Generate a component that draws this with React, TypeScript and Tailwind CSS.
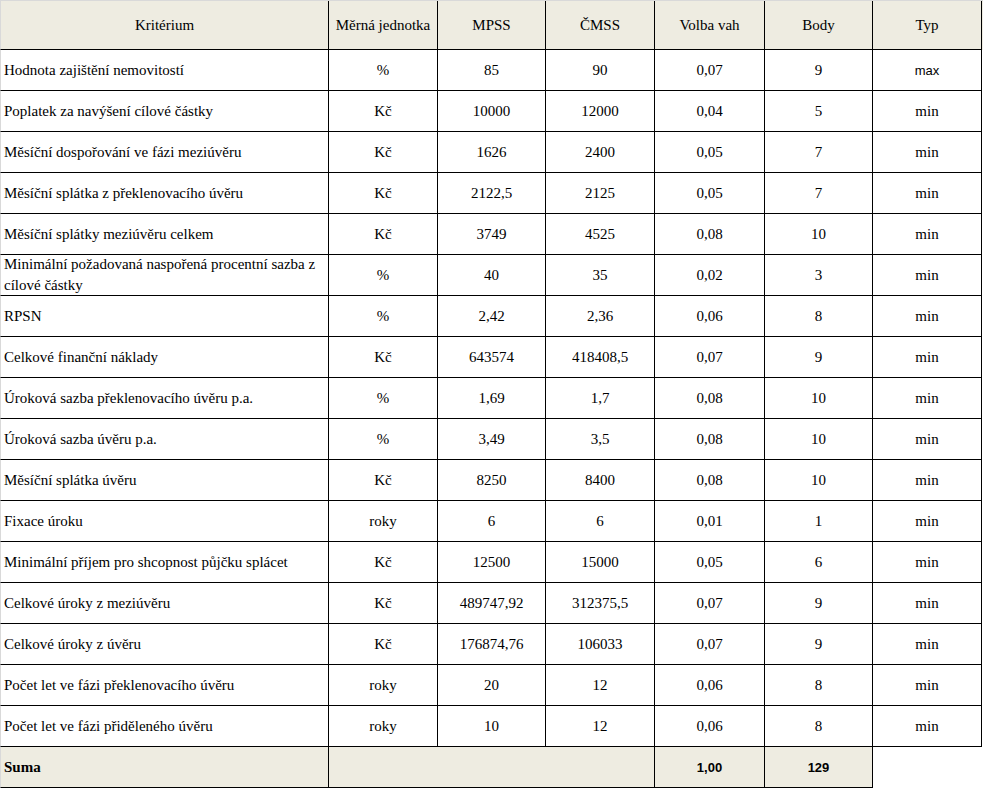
const rows: [string, string, string, string, string, string, string][] = [
  ["Hodnota zajištění nemovitostí", "%", "85", "90", "0,07", "9", "max"],
  ["Poplatek za navýšení cílové částky", "Kč", "10000", "12000", "0,04", "5", "min"],
  ["Měsíční dospořování ve fázi meziúvěru", "Kč", "1626", "2400", "0,05", "7", "min"],
  ["Měsíční splátka z překlenovacího úvěru", "Kč", "2122,5", "2125", "0,05", "7", "min"],
  ["Měsíční splátky meziúvěru celkem", "Kč", "3749", "4525", "0,08", "10", "min"],
  ["Minimální požadovaná naspořená procentní sazba z cílové částky", "%", "40", "35", "0,02", "3", "min"],
  ["RPSN", "%", "2,42", "2,36", "0,06", "8", "min"],
  ["Celkové finanční náklady", "Kč", "643574", "418408,5", "0,07", "9", "min"],
  ["Úroková sazba překlenovacího úvěru p.a.", "%", "1,69", "1,7", "0,08", "10", "min"],
  ["Úroková sazba úvěru p.a.", "%", "3,49", "3,5", "0,08", "10", "min"],
  ["Měsíční splátka úvěru", "Kč", "8250", "8400", "0,08", "10", "min"],
  ["Fixace úroku", "roky", "6", "6", "0,01", "1", "min"],
  ["Minimální příjem pro shcopnost půjčku splácet", "Kč", "12500", "15000", "0,05", "6", "min"],
  ["Celkové úroky z meziúvěru", "Kč", "489747,92", "312375,5", "0,07", "9", "min"],
  ["Celkové úroky z úvěru", "Kč", "176874,76", "106033", "0,07", "9", "min"],
  ["Počet let ve fázi překlenovacího úvěru", "roky", "20", "12", "0,06", "8", "min"],
  ["Počet let ve fázi přiděleného úvěru", "roky", "10", "12", "0,06", "8", "min"],
];

const cell = "flex items-center justify-center border-r border-b border-black shrink-0 text-center";
const widths = ["w-[329px]", "w-[109px]", "w-[108px]", "w-[109px]", "w-[110px]", "w-[108px]", "w-[109px]"];
const sans = "font-[Arial,Arimo,sans-serif]";

export default function App() {
  return (
    <div className="w-[983px] h-[788px] bg-white text-black font-[Times,Tinos,Georgia,serif] text-[15px] leading-[21px]">
      <div className="flex h-[50px] bg-[#eeece1] border-t border-[#d9d9d9]">
        {["Kritérium", "Měrná jednotka", "MPSS", "ČMSS", "Volba vah", "Body", "Typ"].map((h, i) => (
          <div key={h} className={`${cell} ${widths[i]} ${i === 0 ? "border-l border-l-[#d9d9d9]" : ""}`}>
            {h}
          </div>
        ))}
      </div>
      {rows.map((r) => (
        <div key={r[0]} className="flex h-[41px]">
          <div className={`flex items-center border-r border-b border-black border-l border-l-[#d9d9d9] shrink-0 pl-[3px] pr-2 ${widths[0]}`}>
            {r[0]}
          </div>
          {r.slice(1).map((v, i) => (
            <div key={i} className={`${cell} ${widths[i + 1]} ${v === "max" ? `${sans} text-[13px]` : ""}`}>
              {v}
            </div>
          ))}
        </div>
      ))}
      <div className="flex h-[41px]">
        <div className="flex items-center bg-[#eeece1] border-r border-b border-black border-l border-l-[#d9d9d9] shrink-0 pl-[3px] w-[329px] font-bold">
          Suma
        </div>
        <div className="bg-[#eeece1] border-r border-b border-black shrink-0 w-[326px]" />
        <div className={`${cell} w-[110px] bg-[#eeece1] ${sans} font-bold text-[13px]`}>1,00</div>
        <div className={`${cell} w-[108px] bg-[#eeece1] ${sans} font-bold text-[13px]`}>129</div>
      </div>
    </div>
  );
}
